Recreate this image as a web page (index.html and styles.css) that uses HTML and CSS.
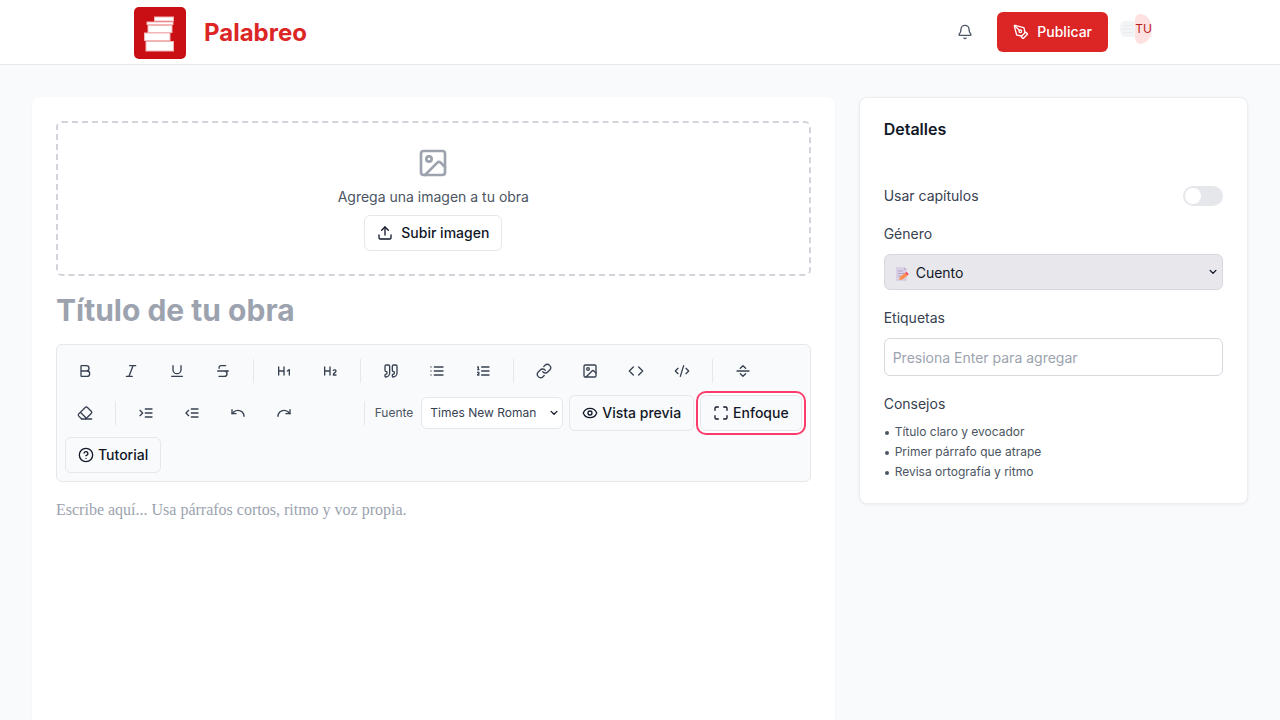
FILE: index.html
```html
<!DOCTYPE html>
<html lang="es">
<head>
<meta charset="utf-8">
<meta name="viewport" content="width=device-width, initial-scale=1">
<title>Palabreo</title>
<link rel="stylesheet" href="styles.css">
</head>
<body>
<header class="site-header">
  <div class="header-inner">
    <a class="brand" href="#">
      <svg class="brand-logo" viewBox="0 0 52 52" aria-hidden="true">
        <rect width="52" height="52" rx="5" fill="#c90f13"/>
        <g fill="#fff" stroke="#f3b4b6" stroke-width="1">
          <rect x="20.500" y="10" width="19" height="4"/>
          <rect x="13" y="15" width="26" height="2.500"/>
          <rect x="14" y="18.500" width="24" height="7"/>
          <rect x="10.500" y="26" width="25.500" height="7.500"/>
          <rect x="12" y="34.500" width="27.500" height="9.500"/>
        </g>
      </svg>
      <span class="brand-name">Palabreo</span>
    </a>
    <div class="header-actions">
      <button class="bell" type="button" aria-label="Notificaciones">
        <svg class="icon" viewBox="0 0 24 24"><path d="M10.268 21a2 2 0 0 0 3.464 0"/><path d="M3.262 15.326A1 1 0 0 0 4 17h16a1 1 0 0 0 .740-1.673C19.410 13.956 18 12.499 18 8A6 6 0 0 0 6 8c0 4.499-1.411 5.956-2.738 7.326"/></svg>
      </button>
      <button class="publish" type="button">
        <svg class="icon" viewBox="0 0 24 24"><path d="M15.707 21.293a1 1 0 0 1-1.414 0l-1.586-1.586a1 1 0 0 1 0-1.414l5.586-5.586a1 1 0 0 1 1.414 0l1.586 1.586a1 1 0 0 1 0 1.414z"/><path d="m18 13-1.375-6.874a1 1 0 0 0-.746-.776L3.235 2.028a1 1 0 0 0-1.207 1.207L5.350 15.879a1 1 0 0 0 .776.746L13 18"/><path d="m2.300 2.300 7.286 7.286"/><circle cx="11" cy="11" r="2"/></svg>
        Publicar
      </button>
      <button class="avatar" type="button" aria-label="Cuenta">
        <svg class="avatar-thumb" viewBox="0 0 15 16" aria-hidden="true"><path d="M3 0h12v16H3Q0 13 0 8T3 0z" fill="#f3f4f6"/><path d="M3 4.500h10M3 8h10M3 11.500h10" stroke="#e9ebee"/></svg>
        <span class="avatar-initials">TU</span>
      </button>
    </div>
  </div>
</header>

<main class="layout">
  <section class="editor-card">
    <div class="dropzone">
      <svg class="icon dropzone-icon" viewBox="0 0 24 24"><rect width="18" height="18" x="3" y="3" rx="2"/><circle cx="9" cy="9" r="2"/><path d="m21 15-3.086-3.086a2 2 0 0 0-2.828 0L6 21"/></svg>
      <p class="dropzone-text">Agrega una imagen a tu obra</p>
      <button class="btn btn-upload" type="button">
        <svg class="icon" viewBox="0 0 24 24"><path d="M21 15v4a2 2 0 0 1-2 2H5a2 2 0 0 1-2-2v-4"/><path d="m17 8-5-5-5 5"/><path d="M12 3v12"/></svg>
        Subir imagen
      </button>
    </div>

    <input class="title-input" type="text" placeholder="Título de tu obra" aria-label="Título">

    <div class="toolbar" role="toolbar" aria-label="Formato">
      <button class="tool" type="button" aria-label="Negrita"><svg class="icon" viewBox="0 0 24 24"><path d="M6 12h9a4 4 0 0 1 0 8H7a1 1 0 0 1-1-1V5a1 1 0 0 1 1-1h7a4 4 0 0 1 0 8"/></svg></button>
      <button class="tool" type="button" aria-label="Cursiva"><svg class="icon" viewBox="0 0 24 24"><path d="M19 4h-9M14 20H5M15 4 9 20"/></svg></button>
      <button class="tool" type="button" aria-label="Subrayado"><svg class="icon" viewBox="0 0 24 24"><path d="M6 4v6a6 6 0 0 0 12 0V4M4 20h16"/></svg></button>
      <button class="tool" type="button" aria-label="Tachado"><svg class="icon" viewBox="0 0 24 24"><path d="M16 4H9a3 3 0 0 0-2.830 4"/><path d="M14 12a4 4 0 0 1 0 8H6M4 12h16"/></svg></button>
      <span class="divider"></span>
      <button class="tool" type="button" aria-label="Encabezado 1"><svg class="icon" viewBox="0 0 24 24"><path d="M4 12h8M4 18V6M12 18V6M17 12l3-2v8"/></svg></button>
      <button class="tool" type="button" aria-label="Encabezado 2"><svg class="icon" viewBox="0 0 24 24"><path d="M4 12h8M4 18V6M12 18V6"/><path d="M21 18h-4c0-4 4-3 4-6 0-1.500-2-2.500-4-1"/></svg></button>
      <span class="divider"></span>
      <button class="tool" type="button" aria-label="Cita"><svg class="icon" viewBox="0 0 24 24"><path d="M16 3a2 2 0 0 0-2 2v6a2 2 0 0 0 2 2 1 1 0 0 1 1 1v1a2 2 0 0 1-2 2 1 1 0 0 0-1 1v2a1 1 0 0 0 1 1 6 6 0 0 0 6-6V5a2 2 0 0 0-2-2z"/><path d="M5 3a2 2 0 0 0-2 2v6a2 2 0 0 0 2 2 1 1 0 0 1 1 1v1a2 2 0 0 1-2 2 1 1 0 0 0-1 1v2a1 1 0 0 0 1 1 6 6 0 0 0 6-6V5a2 2 0 0 0-2-2z"/></svg></button>
      <button class="tool" type="button" aria-label="Lista"><svg class="icon" viewBox="0 0 24 24"><path d="M3 12h.01M3 18h.01M3 6h.01M8 12h13M8 18h13M8 6h13"/></svg></button>
      <button class="tool" type="button" aria-label="Lista numerada"><svg class="icon" viewBox="0 0 24 24"><path d="M10 12h11M10 18h11M10 6h11M4 10h2M4 6h1v4M6 18H4c0-1 2-2 2-3s-1-1.500-2-1"/></svg></button>
      <span class="divider"></span>
      <button class="tool" type="button" aria-label="Enlace"><svg class="icon" viewBox="0 0 24 24"><path d="M10 13a5 5 0 0 0 7.540.540l3-3a5 5 0 0 0-7.070-7.070l-1.720 1.710"/><path d="M14 11a5 5 0 0 0-7.540-.540l-3 3a5 5 0 0 0 7.070 7.070l1.710-1.710"/></svg></button>
      <button class="tool" type="button" aria-label="Imagen"><svg class="icon" viewBox="0 0 24 24"><rect width="18" height="18" x="3" y="3" rx="2"/><circle cx="9" cy="9" r="2"/><path d="m21 15-3.086-3.086a2 2 0 0 0-2.828 0L6 21"/></svg></button>
      <button class="tool" type="button" aria-label="Código"><svg class="icon" viewBox="0 0 24 24"><path d="m16 18 6-6-6-6M8 6l-6 6 6 6"/></svg></button>
      <button class="tool" type="button" aria-label="Bloque de código"><svg class="icon" viewBox="0 0 24 24"><path d="m18 16 4-4-4-4M6 8l-4 4 4 4M14.500 4l-5 16"/></svg></button>
      <span class="divider"></span>
      <button class="tool" type="button" aria-label="Separador"><svg class="icon" viewBox="0 0 24 24"><path d="M3 12h18M8 8l4-4 4 4M16 16l-4 4-4-4"/></svg></button>
      <button class="tool" type="button" aria-label="Limpiar formato"><svg class="icon" viewBox="0 0 24 24"><path d="m7 21-4.300-4.300c-1-1-1-2.500 0-3.400l9.600-9.600c1-1 2.500-1 3.400 0l5.600 5.600c1 1 1 2.500 0 3.400L13 21"/><path d="M22 21H7M5 11l9 9"/></svg></button>
      <span class="divider"></span>
      <button class="tool" type="button" aria-label="Aumentar sangría"><svg class="icon" viewBox="0 0 24 24"><path d="M21 12H11M21 18H11M21 6H11M3 8l4 4-4 4"/></svg></button>
      <button class="tool" type="button" aria-label="Reducir sangría"><svg class="icon" viewBox="0 0 24 24"><path d="M21 12H11M21 18H11M21 6H11M7 8l-4 4 4 4"/></svg></button>
      <button class="tool" type="button" aria-label="Deshacer"><svg class="icon" viewBox="0 0 24 24"><path d="M3 7v6h6"/><path d="M21 17a9 9 0 0 0-9-9 9 9 0 0 0-6 2.300L3 13"/></svg></button>
      <button class="tool" type="button" aria-label="Rehacer"><svg class="icon" viewBox="0 0 24 24"><path d="M21 7v6h-6"/><path d="M3 17a9 9 0 0 1 9-9 9 9 0 0 1 6 2.300l3 2.700"/></svg></button>
      <span class="divider divider-push"></span>
      <div class="font-field">
        <label class="font-label" for="font">Fuente</label>
        <div class="select-wrap">
          <select class="font-select" id="font"><option>Times New Roman</option></select>
          <svg class="icon chevron" viewBox="0 0 24 24"><path d="m5 8 7 7 7-7"/></svg>
        </div>
      </div>
      <button class="btn btn-tool" type="button"><svg class="icon" viewBox="0 0 24 24"><path d="M2.062 12.348a1 1 0 0 1 0-.696 10.750 10.750 0 0 1 19.876 0 1 1 0 0 1 0 .696 10.750 10.750 0 0 1-19.876 0"/><circle cx="12" cy="12" r="3"/></svg>Vista previa</button>
      <button class="btn btn-tool btn-ring" type="button"><svg class="icon" viewBox="0 0 24 24"><path d="M8 3H5a2 2 0 0 0-2 2v3M21 8V5a2 2 0 0 0-2-2h-3M3 16v3a2 2 0 0 0 2 2h3M16 21h3a2 2 0 0 0 2-2v-3"/></svg>Enfoque</button>
      <button class="btn btn-tool" type="button"><svg class="icon" viewBox="0 0 24 24"><circle cx="12" cy="12" r="10"/><path d="M9.090 9a3 3 0 0 1 5.830 1c0 2-3 3-3 3M12 17h.01"/></svg>Tutorial</button>
    </div>

    <textarea class="body-input" placeholder="Escribe aquí... Usa párrafos cortos, ritmo y voz propia." aria-label="Texto de la obra"></textarea>
  </section>

  <aside class="details-card">
    <h2 class="details-title">Detalles</h2>
    <div class="switch-row">
      <label for="chapters">Usar capítulos</label>
      <input class="switch" id="chapters" type="checkbox" role="switch">
    </div>
    <div class="field">
      <label for="genre">Género</label>
      <div class="select-wrap">
        <svg class="genre-icon" viewBox="0 0 14 16" aria-hidden="true"><path d="M1 1h8l3 3v11H1z" fill="#d9d0e6"/><path d="M9 1v3h3z" fill="#bfb3d1"/><path d="M3 5h5M3 7.500h7M3 10h3" stroke="#b3a6c6"/><path d="m4 14 1-3 5-4 2.500 2.500-5 4z" fill="#ff8d4e"/><path d="m10 7 1.500-1.200 2.300 2.400-1.300 1.300z" fill="#f8485b"/></svg>
        <select class="genre-select" id="genre"><option>Cuento</option></select>
        <svg class="icon chevron chevron-genre" viewBox="0 0 24 24"><path d="m5 8 7 7 7-7"/></svg>
      </div>
    </div>
    <div class="field">
      <label for="tags">Etiquetas</label>
      <input class="tags-input" id="tags" type="text" placeholder="Presiona Enter para agregar">
    </div>
    <div class="tips">
      <h3 class="tips-title">Consejos</h3>
      <ul class="tips-list">
        <li>Título claro y evocador</li>
        <li>Primer párrafo que atrape</li>
        <li>Revisa ortografía y ritmo</li>
      </ul>
    </div>
  </aside>
</main>
</body>
</html>
```

FILE: styles.css
```css
*,
*::before,
*::after {
  box-sizing: border-box;
}

body {
  margin: 0;
  height: 100vh;
  overflow: hidden;
  display: flex;
  flex-direction: column;
  background: #f9fafb;
  color: #111827;
  font: 14px/20px Inter, "Liberation Sans", sans-serif;
}

button,
input,
select,
textarea {
  font: inherit;
  color: inherit;
}

h2,
h3,
p,
ul {
  margin: 0;
  padding: 0;
}

.icon {
  width: 16px;
  height: 16px;
  flex: none;
  fill: none;
  stroke: currentColor;
  stroke-width: 2;
  stroke-linecap: round;
  stroke-linejoin: round;
}

/* Header */
.site-header {
  flex: none;
  background: #fff;
  border-bottom: 1px solid #e5e7eb;
}

.header-inner {
  max-width: 1024px;
  height: 64px;
  margin: 0 auto;
  display: flex;
  align-items: center;
  justify-content: space-between;
}

.brand {
  display: flex;
  align-items: center;
  gap: 18px;
  padding: 2px 0 0 6px;
  color: #dc2626;
  text-decoration: none;
}

.brand-logo {
  width: 52px;
  height: 52px;
}

.brand-name {
  font-size: 24px;
  line-height: 32px;
  font-weight: 700;
}

.header-actions {
  display: flex;
  align-items: center;
  gap: 12px;
}

.bell {
  width: 40px;
  height: 40px;
  display: grid;
  place-items: center;
  padding: 0;
  border: 0;
  background: none;
  color: #4b5563;
}

.publish {
  display: flex;
  align-items: center;
  gap: 8px;
  height: 40px;
  padding: 0 16px;
  border: 0;
  border-radius: 6px;
  background: #dc2626;
  color: #fff;
  font-weight: 500;
}

.avatar {
  display: flex;
  align-items: center;
  width: 32px;
  height: 38px;
  padding: 0 0 6px;
  border: 0;
  background: none;
}

.avatar-thumb {
  width: 15px;
  height: 16px;
  flex: none;
}

.avatar-initials {
  display: grid;
  place-items: center;
  width: 17px;
  height: 30px;
  border-radius: 5px 12px 12px 5px / 6px 15px 15px 6px;
  background: #fee2e2;
  color: #b91c1c;
  font-size: 12px;
}

/* Page */
.layout {
  flex: 1;
  min-height: 0;
  display: grid;
  grid-template-columns: repeat(12, minmax(0, 1fr));
  gap: 24px;
  padding: 32px 32px 0;
}

.editor-card {
  grid-column: span 8;
  display: flex;
  flex-direction: column;
  padding: 24px 24px 0;
  border-radius: 8px 8px 0 0;
  background: #fff;
  box-shadow: 0 1px 2px rgba(0, 0, 0, 0.05);
}

.dropzone {
  display: flex;
  flex-direction: column;
  align-items: center;
  gap: 8px;
  padding: 24px 24px 23px;
  border: 2px dashed #d1d5db;
  border-radius: 6px;
  color: #4b5563;
}

.dropzone-icon {
  width: 32px;
  height: 32px;
  color: #9ca3af;
}

.btn {
  display: flex;
  align-items: center;
  height: 36px;
  padding: 0 12px;
  border: 1px solid #e5e7eb;
  border-radius: 6px;
  background: #fff;
  color: #111827;
  font-weight: 500;
}

.btn-upload {
  gap: 8px;
}

.title-input {
  width: 100%;
  height: 36px;
  margin-top: 16px;
  padding: 0;
  border: 0;
  outline: 0;
  background: none;
  font-size: 30px;
  font-weight: 700;
}

.title-input::placeholder,
.body-input::placeholder,
.tags-input::placeholder {
  color: #9ca3af;
  opacity: 1;
}

/* Toolbar */
.toolbar {
  display: flex;
  flex-wrap: wrap;
  align-items: center;
  gap: 6px;
  margin-top: 16px;
  padding: 8px;
  border: 1px solid #e5e7eb;
  border-radius: 6px;
  background: #f9fafb;
}

.tool {
  display: grid;
  place-items: center;
  width: 40px;
  height: 36px;
  padding: 0;
  border: 0;
  background: none;
  color: #374151;
}

.divider {
  width: 1px;
  height: 24px;
  margin: 0 4px;
  background: #e5e7eb;
}

.divider-push {
  margin-left: auto;
}

.font-field {
  display: flex;
  align-items: center;
  gap: 8px;
  font-size: 12px;
}

.font-label {
  color: #4b5563;
}

.select-wrap {
  position: relative;
}

.chevron {
  position: absolute;
  right: 4px;
  top: 50%;
  width: 10px;
  height: 10px;
  margin-top: -5px;
  stroke-width: 3;
  pointer-events: none;
}

.font-select {
  width: 142px;
  height: 32px;
  padding: 0 8px;
  border: 1px solid #e5e7eb;
  border-radius: 6px;
  appearance: none;
  background: #fff;
  color: #374151;
}

.btn-tool {
  gap: 4px;
  background: #f9fafb;
}

.btn-ring {
  box-shadow: 0 0 0 2px #fff, 0 0 0 4px #fb3b6b;
}

.body-input {
  flex: 1;
  width: 100%;
  margin-top: 16px;
  padding: 0;
  border: 0;
  outline: 0;
  resize: none;
  background: none;
  font: 16px/24px "Liberation Serif", "Times New Roman", serif;
}

/* Details */
.details-card {
  grid-column: span 4;
  align-self: start;
  display: flex;
  flex-direction: column;
  gap: 18px;
  padding: 21px 24px;
  border: 1px solid #eceef1;
  border-radius: 8px;
  background: #fff;
  color: #374151;
  box-shadow: 0 1px 3px rgba(0, 0, 0, 0.06);
}

.details-title {
  margin-bottom: 29px;
  color: #111827;
  font-size: 16px;
  font-weight: 600;
}

.switch-row {
  display: flex;
  align-items: center;
  justify-content: space-between;
}

.switch {
  appearance: none;
  width: 40px;
  height: 20px;
  margin: 0;
  padding: 2px;
  border-radius: 10px;
  background: #e5e7eb;
}

.switch::before {
  content: "";
  display: block;
  width: 16px;
  height: 16px;
  border-radius: 50%;
  background: #fff;
}

.switch:checked {
  background: #dc2626;
}

.switch:checked::before {
  margin-left: auto;
}

.field {
  display: flex;
  flex-direction: column;
  gap: 10px;
}

.genre-select,
.tags-input {
  display: block;
  width: 100%;
  border: 1px solid #d8d8df;
  border-radius: 6px;
}

.genre-select {
  height: 36px;
  padding: 1px 24px 0 31px;
  appearance: none;
  background: #e8e7ec;
  color: #111827;
}

.genre-icon {
  position: absolute;
  left: 11px;
  top: 12px;
  width: 14px;
  height: 16px;
}

.chevron-genre {
  right: 5px;
  color: #111827;
}

.tags-input {
  height: 38px;
  padding: 0 8px;
  background: #fff;
}

.tips {
  display: flex;
  flex-direction: column;
  gap: 8px;
}

.tips-title {
  font-size: 14px;
  font-weight: 400;
}

.tips-list {
  padding-left: 11px;
  color: #4b5563;
  font-size: 12px;
}

.tips-list li {
  list-style: none;
}

.tips-list li::before {
  content: "";
  float: left;
  width: 4px;
  height: 4px;
  margin: 9px 0 0 -10px;
  border-radius: 50%;
  background: #4b5563;
}
```
